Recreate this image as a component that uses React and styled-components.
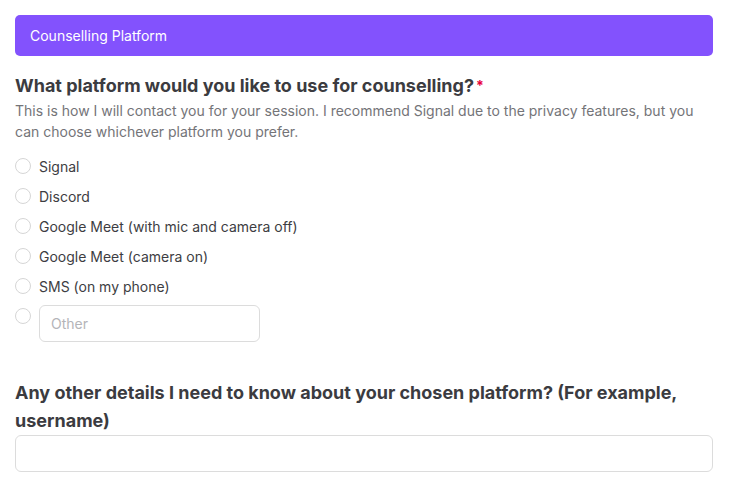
import React from "react";
import styled, { createGlobalStyle } from "styled-components";

const Global = createGlobalStyle`
  html, body { margin: 0; padding: 0; background: #ffffff; }
  body { font-family: Inter, "Noto Sans", sans-serif; }
  * { box-sizing: border-box; }
`;

const Page = styled.div`
  padding: 15px 18px 15px 15px;
  display: flex;
  flex-direction: column;
`;

const SectionBar = styled.div`
  height: 41px;
  background: #8352fd;
  border-radius: 5px;
  color: #ffffff;
  font-size: 14px;
  display: flex;
  align-items: center;
  padding: 0 15px;
`;

const Question = styled.div`
  margin-top: ${(p) => p.$top}px;
  font-size: 18px;
  font-weight: 700;
  line-height: ${(p) => p.$lh}px;
  color: #3b3b40;
`;

const Required = styled.span`
  color: #e8003d;
  font-size: 14px;
  margin-left: 2px;
  vertical-align: top;
  position: relative;
  top: 0px;
`;

const Description = styled.div`
  font-size: 14px;
  line-height: 21px;
  color: #747478;
`;

const OptionList = styled.div`
  margin-top: 13px;
  display: flex;
  flex-direction: column;
  gap: 8px;
`;

const Option = styled.label`
  display: flex;
  align-items: ${(p) => (p.$top ? "flex-start" : "center")};
  gap: 8px;
  min-height: 22px;
  font-size: 14px;
  color: #3d3d42;
`;

const Radio = styled.span`
  width: 16px;
  height: 16px;
  border-radius: 50%;
  border: 1px solid #d6d6d6;
  background: #fff;
  flex-shrink: 0;
  margin-top: ${(p) => (p.$top ? "3px" : "0")};
`;

const TextInput = styled.input`
  height: 37px;
  width: ${(p) => p.$w || "100%"};
  border: 1px solid #dcdcdc;
  border-radius: 6px;
  padding: 0 11px;
  font-family: Inter, "Noto Sans", sans-serif;
  font-size: 14px;
  color: #3d3d42;
  outline: none;
  &::placeholder { color: #b4b4b8; }
`;

const options = [
  "Signal",
  "Discord",
  "Google Meet (with mic and camera off)",
  "Google Meet (camera on)",
  "SMS (on my phone)",
];

export default function App() {
  return (
    <Page>
      <Global />
      <SectionBar>Counselling Platform</SectionBar>
      <Question $top={16} $lh={28}>
        What platform would you like to use for counselling?
        <Required>*</Required>
      </Question>
      <Description>
        This is how I will contact you for your session. I recommend Signal due to the privacy features, but you
        can choose whichever platform you prefer.
      </Description>
      <OptionList>
        {options.map((o) => (
          <Option key={o}>
            <Radio />
            {o}
          </Option>
        ))}
        <Option $top>
          <Radio $top />
          <TextInput $w="221px" placeholder="Other" />
        </Option>
      </OptionList>
      <Question $top={37} $lh={28}>
        Any other details I need to know about your chosen platform? (For example, username)
      </Question>
      <TextInput />
    </Page>
  );
}
